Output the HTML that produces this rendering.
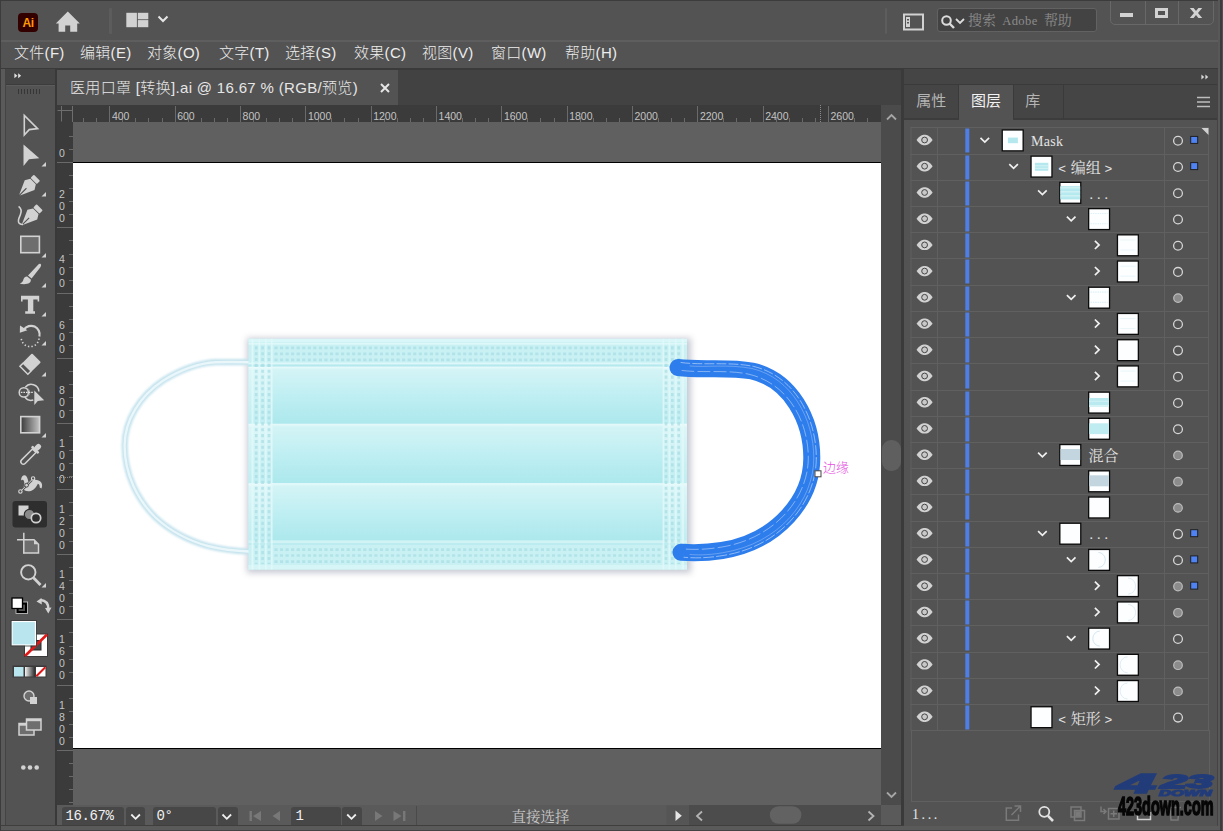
<!DOCTYPE html>
<html lang="zh-CN"><head><meta charset="utf-8"><title>Illustrator</title>
<style>
html,body{margin:0;padding:0;}
body{width:1223px;height:831px;overflow:hidden;background:#535353;font-family:"Liberation Sans","Noto Sans CJK SC",sans-serif;color:#dcdcdc;}
#app{position:relative;width:1223px;height:831px;overflow:hidden;background:#535353;}
.abs{position:absolute;}
svg{position:absolute;overflow:visible;}
/* top bar */
#topbar{position:absolute;left:0;top:0;width:1223px;height:40px;background:#535353;}
#menubar{position:absolute;left:0;top:40px;width:1223px;height:29px;background:#535353;}
#menubar span{position:absolute;top:3px;font-size:15px;line-height:20px;color:#ececec;white-space:nowrap;letter-spacing:0.3px;font-weight:300;}
/* toolbar */
#toolbar{position:absolute;left:5.6px;top:69px;width:49px;height:756.5px;background:#535353;}
#toolhead{position:absolute;left:0;top:0;width:49.4px;height:15px;background:#454545;}
/* document */
#tabbar{position:absolute;left:57px;top:70px;width:844px;height:35px;background:#424242;}
#tab{position:absolute;left:0;top:0;width:341px;height:35px;background:#535353;}
#tab .t{position:absolute;left:13px;top:8px;letter-spacing:0.33px;font-weight:300;font-size:15px;line-height:20px;color:#e6e6e6;white-space:pre;}
#paste{position:absolute;left:73px;top:122px;width:808px;height:684px;background:#606060;}
#art{position:absolute;left:73px;top:162px;width:808px;height:587px;background:#fff;border-top:1px solid #000;border-bottom:1px solid #000;box-sizing:border-box;}
#hruler{position:absolute;left:57px;top:105px;width:824px;height:17px;background:#3b3b3b;}
#vruler{position:absolute;left:57px;top:122px;width:16px;height:684px;background:#3b3b3b;}
.rl{position:absolute;font-size:10px;line-height:10px;color:#c8c8c8;font-family:"Liberation Sans",sans-serif;}
#vscroll{position:absolute;left:881px;top:105px;width:20.5px;height:701px;background:#4b4b4b;}
#status{position:absolute;left:56.5px;top:805px;width:844.5px;height:19.5px;background:#5a5a5a;}
/* panel */
#panel{position:absolute;left:903.7px;top:69px;width:313.6px;height:757px;background:#535353;}
#phead{position:absolute;left:0;top:0;width:314px;height:15px;background:#454545;}
#ptabs{position:absolute;left:0;top:16px;width:314px;height:34.5px;background:#454545;}
.ptab{position:absolute;top:0;height:34px;font-size:15px;line-height:20px;color:#b4b4b4;font-weight:400;}
.ptab span{position:absolute;top:6.2px;white-space:nowrap;}
#layers{position:absolute;left:7px;top:59px;width:299px;height:603px;}
.row{position:absolute;left:0;width:299px;height:26px;border-bottom:1px solid #464646;box-sizing:border-box;}
.lt{position:absolute;font-family:"Liberation Mono","Noto Serif CJK SC",serif;font-size:13px;line-height:16px;color:#e0e0e0;white-space:pre;}
.th{position:absolute;width:20px;height:20px;background:#fff;border:1px solid #1a1a1a;box-sizing:content-box;}
.rl{font-size:10.5px;line-height:10px;color:#c4c4c4;}
.rl.v{width:8px;text-align:center;}
.lt{font-family:"Liberation Serif","Noto Serif CJK SC",serif;font-size:15px;line-height:18px;color:#e4e4e4;}
.lt .ab{font-family:"Liberation Mono",monospace;font-size:13px;display:inline-block;width:11px;text-align:left;margin-left:-1.6px;margin-right:1.6px;font-weight:normal;}
.lt .ab.r{text-align:right;margin-left:0.4px;margin-right:0;}
.sbox{position:absolute;top:1.5px;height:18px;background:#474747;border-radius:3px 3px 0 0;}
.sbox span{position:absolute;top:0.5px;font-family:"Liberation Mono","Noto Serif CJK SC",monospace;font-size:14px;line-height:18px;color:#f0f0f0;white-space:pre;letter-spacing:-0.4px;}
#wm1{position:absolute;left:1117px;top:770px;font-family:"Liberation Sans",sans-serif;font-weight:bold;font-style:italic;font-size:27px;line-height:28px;color:#223c7a;transform-origin:0 0;transform:scaleX(2.6);white-space:nowrap;-webkit-text-stroke:1.6px #223c7a;}
#wm2{position:absolute;left:1159px;top:788.6px;font-family:"Liberation Sans",sans-serif;font-weight:bold;font-style:italic;font-size:9px;line-height:9px;color:#223c7a;transform-origin:0 0;transform:scaleX(1.85);white-space:nowrap;-webkit-text-stroke:1.1px #223c7a;}
#wm3{position:absolute;left:1118px;top:792.6px;font-family:"Liberation Sans",sans-serif;font-weight:bold;font-size:25px;line-height:26px;color:#060606;transform-origin:0 0;transform:scaleX(0.578);white-space:nowrap;-webkit-text-stroke:1.5px #060606;}

#wm4{position:absolute;left:1161px;top:771.5px;font-family:"Liberation Sans",sans-serif;font-weight:bold;font-style:italic;font-size:19px;line-height:20px;color:#223c7a;transform-origin:0 0;transform:scaleX(2.45);white-space:nowrap;-webkit-text-stroke:1.8px #223c7a;}

</style></head>
<body>
<div id="app">
<!-- topbar -->
<div id="topbar">
  <!-- Ai logo -->
  <div class="abs" style="left:18px;top:13px;width:20px;height:19px;background:#330000;border-radius:4px;"></div>
  <div class="abs" style="left:18px;top:13px;width:20px;height:19px;text-align:center;font-family:'Liberation Sans',sans-serif;font-weight:bold;font-size:12px;line-height:20px;color:#ff9a00;letter-spacing:-0.5px;">Ai</div>
  <!-- home -->
  <svg style="left:55px;top:11px" width="26" height="22" viewBox="0 0 26 22"><path d="M12.8 0.6 L0.8 12.4 L3.6 12.4 L3.6 20.8 L10.2 20.8 L10.2 14.4 L15.2 14.4 L15.2 20.8 L22.2 20.8 L22.2 12.4 L24.8 12.4 Z" fill="#d2d2d2"/></svg>
  <div class="abs" style="left:109.2px;top:8px;width:2.4px;height:26px;background:#5c5c5c;border-radius:1px;"></div>
  <!-- workspace switcher -->
  <svg style="left:126px;top:12px" width="24" height="16" viewBox="0 0 24 16"><rect x="0.3" y="0.8" width="10.6" height="14.4" fill="#d2d2d2"/><rect x="11.8" y="0.8" width="10.5" height="6.5" fill="#d2d2d2"/><rect x="11.8" y="8.1" width="10.5" height="7.1" fill="#d2d2d2"/></svg>
  <svg style="left:157px;top:15px" width="12" height="8" viewBox="0 0 12 8"><path d="M1.5 1.5 L6 6 L10.5 1.5" fill="none" stroke="#e6e6e6" stroke-width="2"/></svg>
  <!-- right side -->
  <div class="abs" style="left:884.8px;top:8px;width:2.3px;height:26px;background:#5d5d5d;border-radius:1px;"></div>
  <svg style="left:903px;top:13px" width="22" height="18" viewBox="0 0 22 18"><rect x="1" y="1.5" width="19" height="15" fill="none" stroke="#d2d2d2" stroke-width="2"/><rect x="3" y="4" width="4" height="10" fill="#d2d2d2"/><rect x="4" y="6" width="2" height="1.5" fill="#535353"/><rect x="4" y="9" width="2" height="1.5" fill="#535353"/></svg>
  <div class="abs" style="left:937px;top:8px;width:160px;height:24px;background:#434343;border:1px solid #626262;border-radius:3px;box-sizing:border-box;"></div>
  <svg style="left:940px;top:14px" width="26" height="16" viewBox="0 0 26 16"><circle cx="6.5" cy="6.5" r="4.3" fill="none" stroke="#dcdcdc" stroke-width="2"/><path d="M9.5 9.5 L14 14" stroke="#dcdcdc" stroke-width="2.4"/><path d="M16 5 L20 9 L24 5" fill="none" stroke="#dcdcdc" stroke-width="1.8"/></svg>
  <div class="abs" style="left:968px;top:10.5px;font-family:'Liberation Serif','Noto Serif CJK SC',serif;font-size:12.6px;line-height:20px;color:#8c8c8c;white-space:pre;letter-spacing:0.4px;word-spacing:2.6px;"><span style="font-size:14px;letter-spacing:0">搜索</span> Adobe <span style="font-size:14px;letter-spacing:0">帮助</span></div>
  <!-- window controls -->
  <div class="abs" style="left:1110px;top:-2px;width:104px;height:27px;border:1px solid #686868;border-radius:0 0 5px 5px;box-sizing:border-box;"></div>
  <div class="abs" style="left:1145px;top:0;width:1px;height:24px;background:#686868;"></div>
  <div class="abs" style="left:1178px;top:0;width:1px;height:24px;background:#686868;"></div>
  <div class="abs" style="left:1120px;top:13px;width:13px;height:4px;background:#d2d2d2;"></div>
  <div class="abs" style="left:1155px;top:8px;width:13px;height:10px;border:3px solid #d2d2d2;border-width:3px 3px 3px 3px;box-sizing:border-box;"></div>
  <svg style="left:1189px;top:8px" width="14" height="10" viewBox="0 0 14 10"><path d="M0.8 0 L4.6 0 L7 3.1 L9.4 0 L13.2 0 L9 5 L13.2 10 L9.4 10 L7 6.9 L4.6 10 L0.8 10 L5 5 Z" fill="#d2d2d2"/></svg>
  </div>

<!-- menubar -->
<div id="menubar">
  <span style="left:14px">文件(F)</span>
  <span style="left:80px">编辑(E)</span>
  <span style="left:147px">对象(O)</span>
  <span style="left:219px">文字(T)</span>
  <span style="left:285px">选择(S)</span>
  <span style="left:354px">效果(C)</span>
  <span style="left:422px">视图(V)</span>
  <span style="left:491px">窗口(W)</span>
  <span style="left:565px">帮助(H)</span>
</div>
<div class="abs" style="left:1px;top:40.4px;width:1217px;height:1.2px;background:#5e5e5e;"></div>
<div class="abs" style="left:0;top:68px;width:1223px;height:1.7px;background:#3a3a3a;"></div>

<!-- toolbar -->
<div class="abs" style="left:0;top:69px;width:5.5px;height:762px;background:#5a5a5a;"></div><div class="abs" style="left:5px;top:69px;width:0.8px;height:757px;background:#444;"></div>
<div id="toolbar">
  <div id="toolhead"></div>
  <div class="abs" style="left:0;top:14.6px;width:49px;height:1px;background:#3c3c3c;"></div>
  <div class="abs" style="left:0;top:15.8px;width:49px;height:1px;background:#5c5c5c;"></div>
  <svg style="left:8.2px;top:4.4px" width="7.6" height="5.6" viewBox="0 0 10 7"><path d="M0.5 0.3 L4.4 3.5 L0.5 6.7 Z M5.5 0.3 L9.4 3.5 L5.5 6.7 Z" fill="#e2e2e2"/></svg>
  <div class="abs" style="left:12.4px;top:19.6px;width:23px;height:5.6px;background:repeating-linear-gradient(90deg,#363636 0,#363636 1px,transparent 1px,transparent 3px);"></div>
</div>
<svg id="tools" style="left:0;top:0" width="60" height="831" viewBox="0 0 60 831">
  <g fill="none" stroke="#d2d2d2" stroke-width="1.6" stroke-linejoin="miter">
    <!-- selection -->
    <path d="M24.3 115.5 L24.3 135 L29.2 129.6 L37.6 128.6 Z"/>
  </g>
  <g fill="#d2d2d2">
    <!-- direct selection -->
    <path d="M23.5 144.5 L23.5 166 L29 159.3 L39.3 158.2 Z"/>
    <path d="M46 162 L46 166.5 L41.5 166.5 Z"/>
    <!-- pen -->
    <g transform="translate(27.5,187.2) rotate(45)">
      <rect x="-4.4" y="-13.4" width="8.8" height="4.7" rx="0.9"/>
      <path d="M-3.9 -7.9 L3.9 -7.9 L6.9 -3 L0.55 11.2 L0.55 1.5 L-0.55 1.5 L-0.55 11.2 L-6.9 -3 Z"/>
    </g>
    <path d="M46 192 L46 196.5 L41.5 196.5 Z"/>
    <!-- curvature -->
    <g transform="translate(30.2,216.8) rotate(45)">
      <rect x="-4.4" y="-13.4" width="8.8" height="4.7" rx="0.9"/>
      <path d="M-3.9 -7.9 L3.9 -7.9 L6.9 -3 L0.55 11.2 L0.55 1.5 L-0.55 1.5 L-0.55 11.2 L-6.9 -3 Z"/>
    </g>
    <path d="M18.6 206.3 C21.5 208.5 21.8 211.5 20.3 215 C18.8 218.3 17.3 220.5 19 223 C20 224.3 21.5 224.6 23 224.4" fill="none" stroke="#d2d2d2" stroke-width="1.6"/>
    <!-- rectangle -->
    <rect x="20.8" y="236.3" width="18.6" height="16.4" fill="#6e6e6e" stroke="#d2d2d2" stroke-width="1.6"/>
    <path d="M46 253 L46 257.5 L41.5 257.5 Z"/>
    <!-- brush -->
    <path d="M40.6 264.1 C41.6 265 41 266.3 40.2 267.4 L31.6 278.6 L28 275.6 L37.9 265 C38.8 264 39.9 263.5 40.6 264.1 Z"/>
    <path d="M27.2 276.4 L30.8 279.5 C31.3 283 27.5 285 19.8 283.8 C22.3 282.7 23 281.2 23.4 279.6 C24 277.4 25.5 276.2 27.2 276.4 Z"/>
    <path d="M46 283 L46 287.5 L41.5 287.5 Z"/>
    <!-- type -->
    <path d="M21 295.8 L39.2 295.8 L39.2 301.4 L37.6 301.4 L37.6 299.6 L33.3 299.6 L33.3 311.2 L35 311.2 L35 313.8 L25.2 313.8 L25.2 311.2 L27.9 311.2 L27.9 299.6 L22.6 299.6 L22.6 301.4 L21 301.4 Z"/>
    <path d="M46 312 L46 316.5 L41.5 316.5 Z"/>
    <!-- rotate -->
    <path d="M24 329.5 A8.6 8.6 0 0 1 39.4 336.5" fill="none" stroke="#d2d2d2" stroke-width="2.2"/>
    <path d="M20 325.5 L27.4 330.3 L19.8 332.8 Z"/>
    <path d="M39 338.5 A8.8 8.8 0 0 1 21.3 337" fill="none" stroke="#d2d2d2" stroke-width="1.6" stroke-dasharray="1.4 2.1"/>
    <path d="M46 341 L46 345.5 L41.5 345.5 Z"/>
    <!-- eraser -->
    <g transform="translate(31.8,362.4) rotate(-45)">
      <rect x="-6.6" y="-6.3" width="13.2" height="12.6" rx="1"/>
      <rect x="-11.2" y="-5.6" width="4.6" height="11.2" fill="none" stroke="#d2d2d2" stroke-width="1.5"/>
    </g>
    <path d="M46 372 L46 376.5 L41.5 376.5 Z"/>
    <!-- shape builder -->
    <circle cx="23.8" cy="392.4" r="4.6" fill="none" stroke="#d2d2d2" stroke-width="1.5"/>
    <path d="M25.3 387.3 A7.6 7.6 0 0 1 38.9 391.5" fill="none" stroke="#d2d2d2" stroke-width="1.5"/>
    <path d="M24.8 396.9 A7.6 7.6 0 0 0 33.3 400" fill="none" stroke="#d2d2d2" stroke-width="1.5"/>
    <path d="M27 388 A5 5 0 0 1 27 397" fill="none" stroke="#9a9a9a" stroke-width="1"/>
    <path d="M20.8 392.4 L33.5 392.4" fill="none" stroke="#e0e0e0" stroke-width="1.2" stroke-dasharray="1.6 1"/>
    <path d="M34.3 390.6 L34.3 405 L37.8 401 L44.2 400.3 Z"/>
    <!-- gradient -->
    <linearGradient id="gg" x1="0" y1="0" x2="1" y2="0"><stop offset="0" stop-color="#3a3a3a"/><stop offset="1" stop-color="#c4c4c4"/></linearGradient>
    <rect x="20.8" y="416.6" width="18.8" height="16.2" fill="url(#gg)" stroke="#d2d2d2" stroke-width="1.6"/>
    <path d="M46 433 L46 437.5 L41.5 437.5 Z"/>
    <!-- eyedropper -->
    <g transform="translate(30,455) rotate(45)">
      <rect x="-2.6" y="-14.5" width="5.2" height="7" rx="2.2"/>
      <rect x="-4.8" y="-8.6" width="9.6" height="2.6" rx="0.8"/>
      <path d="M-2.5 -6 L2.5 -6 L2.5 9.4 A2.5 2.5 0 0 1 -2.5 9.4 Z" fill="none" stroke="#d2d2d2" stroke-width="1.5" stroke-linejoin="round"/>
    </g>
    <!-- warp -->
    <path d="M21.2 480.4 C21 477.5 22.5 475.3 24.5 475.3 C26.7 475.4 27.7 478.6 28.4 481.6 C30.6 480.4 33.2 479.5 36.6 479.9 C40.3 480.4 42.3 482.9 42.1 485.6 C42 486.9 41.8 487.8 41.4 488.5 L39.7 487.5 C39.9 485.6 39.2 483.9 37.9 483.7 C36.2 487 33.8 490.6 29.5 491.2 C26.6 491.6 23.8 490.6 22.6 488.3 C24.6 485.6 24.8 482.6 23.7 480.6 C23.1 479.6 22 479.7 21.2 480.4 Z"/>
    <path d="M20.6 491.3 L33 478.6" stroke="#535353" stroke-width="2.6" fill="none"/>
    <path d="M20.6 491.3 L33 478.6" stroke="#d8d8d8" stroke-width="1" fill="none"/>
    <circle cx="26.6" cy="485.2" r="1.9" fill="#d2d2d2" stroke="#4a4a4a" stroke-width="1"/>
    <circle cx="20.4" cy="491.5" r="1.7" fill="#535353" stroke="#d8d8d8" stroke-width="1.1"/>
    <circle cx="33.1" cy="478.4" r="1.7" fill="#535353" stroke="#d8d8d8" stroke-width="1.1"/>
    <!-- live paint selected -->
    <rect x="12.5" y="501" width="34.5" height="26.5" rx="3" fill="#2e2e2e"/>
    <rect x="18.5" y="505.5" width="10" height="10" fill="#d2d2d2"/>
    <circle cx="29.5" cy="514.5" r="5.2" fill="#8a8a8a" stroke="#2e2e2e" stroke-width="1.2"/>
    <circle cx="36" cy="518" r="4.7" fill="#2e2e2e" stroke="#d2d2d2" stroke-width="1.7"/>
    <!-- artboard -->
    <path d="M23.8 532.8 L23.8 553.6 M17 539.8 L23.8 539.8" stroke="#d2d2d2" stroke-width="1.5" fill="none"/>
    <path d="M23.8 539.8 L34 539.8 L38.5 544.3 L38.5 553 L23.8 553 Z" fill="#6e6e6e" stroke="#d2d2d2" stroke-width="1.5"/>
    <path d="M34 539.8 L34 544.3 L38.5 544.3 Z" fill="#d2d2d2" stroke="none"/>
    <!-- zoom -->
    <circle cx="28.3" cy="572.3" r="7.2" fill="none" stroke="#d2d2d2" stroke-width="1.9"/>
    <path d="M33.5 577.8 L40.5 585" stroke="#d2d2d2" stroke-width="2.8" fill="none"/>
    <path d="M46 583 L46 587.5 L41.5 587.5 Z"/>
    <!-- default fill/stroke -->
    <rect x="17.3" y="603.3" width="9" height="9" fill="none" stroke="#000" stroke-width="2.6"/>
    <rect x="16" y="602" width="11.6" height="11.6" fill="none" stroke="#d2d2d2" stroke-width="0.8"/>
    <rect x="12" y="598" width="10.5" height="10.5" fill="#fff" stroke="#000" stroke-width="1.3"/>
    <!-- swap -->
    <path d="M40.5 600 C46 600.5 48.5 604 48.3 609" fill="none" stroke="#d2d2d2" stroke-width="2.4"/>
    <path d="M36.5 601.5 L41.5 598 L41.8 604.6 Z M45 608 L51.5 607.6 L48.3 613.5 Z"/>
  </g>
  <!-- stroke swatch -->
  <rect x="24.5" y="634" width="23" height="22.5" fill="#fff" stroke="#3a3a3a" stroke-width="1"/>
  <rect x="31" y="640.5" width="10" height="9.5" fill="#4a4a4a" stroke="#2a2a2a" stroke-width="1"/>
  <path d="M25 656 L47 634.5" stroke="#e01818" stroke-width="2.6"/>
  <!-- fill swatch -->
  <rect x="12" y="621.5" width="23.5" height="23.5" fill="#b9e6ee" stroke="#fff" stroke-width="1.2"/>
  <rect x="11" y="620.5" width="25.5" height="25.5" fill="none" stroke="#3a3a3a" stroke-width="0.8"/>
  <!-- modes -->
  <rect x="12.5" y="665.5" width="34" height="12" fill="#3a3a3a"/>
  <rect x="14" y="667" width="9.5" height="9.5" fill="#b9e6ee"/>
  <linearGradient id="gm" x1="0" y1="0" x2="1" y2="0"><stop offset="0" stop-color="#f4f4f4"/><stop offset="1" stop-color="#333"/></linearGradient>
  <rect x="25" y="667" width="9.5" height="9.5" fill="url(#gm)"/>
  <rect x="36" y="667" width="9.5" height="9.5" fill="#fff"/>
  <path d="M36.3 676.3 L45.3 667.3" stroke="#e01818" stroke-width="2"/>
  <!-- draw mode -->
  <circle cx="29" cy="696" r="5" fill="#6e6e6e" stroke="#d2d2d2" stroke-width="1.4"/>
  <rect x="30" y="697" width="7" height="7" fill="#d2d2d2"/>
  <!-- screen mode -->
  <rect x="19" y="723.5" width="15" height="11.5" fill="#6e6e6e" stroke="#d2d2d2" stroke-width="1.5"/>
  <rect x="19" y="723.5" width="15" height="2.2" fill="#d2d2d2"/>
  <rect x="26.5" y="719" width="14.5" height="11" fill="#6e6e6e" stroke="#d2d2d2" stroke-width="1.5"/>
  <rect x="26.5" y="719" width="14.5" height="2.2" fill="#d2d2d2"/>
  <!-- more -->
  <circle cx="23.3" cy="767.5" r="2.3" fill="#d2d2d2"/><circle cx="30" cy="767.5" r="2.3" fill="#d2d2d2"/><circle cx="36.7" cy="767.5" r="2.3" fill="#d2d2d2"/>
</svg>

<!-- doc -->
<div id="tabbar">
  <div id="tab"><div class="t">医用口罩 [转换].ai @ 16.67 % (RGB/预览)</div>
    <svg style="left:323px;top:13px" width="10" height="10" viewBox="0 0 10 10"><path d="M1 1 L9 9 M9 1 L1 9" stroke="#e6e6e6" stroke-width="2"/></svg>
  </div>
</div>
<div id="paste"></div>
<div id="art"></div>
<div id="vscroll">
  <svg style="left:5px;top:8px" width="11" height="8" viewBox="0 0 11 8"><path d="M1 6.5 L5.5 2 L10 6.5" fill="none" stroke="#a6a6a6" stroke-width="1.8"/></svg>
  <div class="abs" style="left:1px;top:335px;width:18.5px;height:31px;border-radius:9px;background:#5f5f5f;"></div>
  <svg style="left:5px;top:686px" width="11" height="8" viewBox="0 0 11 8"><path d="M1 1.5 L5.5 6 L10 1.5" fill="none" stroke="#a6a6a6" stroke-width="1.8"/></svg>
</div>
<div class="abs" style="left:901px;top:69px;width:3px;height:762px;background:#3a3a3a;"></div>

<!-- canvas -->
<svg id="artsvg" style="left:0;top:0" width="901" height="831" viewBox="0 0 901 831">
  <defs>
    <filter id="blur3" x="-10%" y="-10%" width="120%" height="120%"><feGaussianBlur stdDeviation="3.2"/></filter>
    <filter id="blur05" x="-5%" y="-5%" width="110%" height="110%"><feGaussianBlur stdDeviation="0.45"/></filter>
    <filter id="blur1" x="-10%" y="-10%" width="120%" height="120%"><feGaussianBlur stdDeviation="0.8"/></filter>
    <linearGradient id="pleat" x1="0" y1="0" x2="0" y2="1">
      <stop offset="0" stop-color="#e8fafb"/><stop offset="0.05" stop-color="#d4f4f6"/><stop offset="0.55" stop-color="#bdeef2"/><stop offset="1" stop-color="#ace8ed"/>
    </linearGradient>
    <linearGradient id="pleatside" x1="0" y1="0" x2="0" y2="1">
      <stop offset="0" stop-color="#eefcfc"/><stop offset="0.06" stop-color="#dcf6f8"/><stop offset="1" stop-color="#bfeef2"/>
    </linearGradient>
  </defs>
  <!-- shadow -->
  <rect x="247" y="338" width="444" height="235" fill="#868aa0" opacity="0.45" filter="url(#blur3)"/>
  <!-- left ear loop -->
  <g fill="none" stroke-linecap="round">
    <path d="M249 362.2 C236 362 222 362 215.8 362.2 C200 363 180 370 162.9 380.7 C140 396 124.6 420 124.6 445.5 C124.6 475 138 500 155 517 C172 533 190 541 207.9 546 C222 549.5 236 551 249 551.5" stroke="#c3e2ed" stroke-width="6.2" filter="url(#blur1)"/>
    <path d="M249 362.2 C236 362 222 362 215.8 362.2 C200 363 180 370 162.9 380.7 C140 396 124.6 420 124.6 445.5 C124.6 475 138 500 155 517 C172 533 190 541 207.9 546 C222 549.5 236 551 249 551.5" stroke="#e9f6fa" stroke-width="2.4" filter="url(#blur05)"/>
  </g>
  <!-- mask body -->
  <rect x="248.5" y="338.8" width="438.5" height="230.7" fill="#c9f1f4"/>
  <rect x="248.5" y="338.8" width="438.5" height="3.6" fill="#d9f6f8"/>
  <rect x="248.5" y="343" width="438.5" height="1.6" fill="#def7f9"/>
  <rect x="248.5" y="362.5" width="438.5" height="2" fill="#def7f9"/>
  <rect x="248.5" y="364.6" width="438.5" height="2.2" fill="#b4e9ee"/>
  <!-- pleats full-width (side strips) -->
  <rect x="248.5" y="366.8" width="438.5" height="57" fill="url(#pleatside)"/>
  <rect x="248.5" y="423.8" width="438.5" height="59.5" fill="url(#pleatside)"/>
  <rect x="248.5" y="483.3" width="438.5" height="57.2" fill="url(#pleatside)"/>
  <!-- pleats inner -->
  <rect x="272" y="366.8" width="391.3" height="57" fill="url(#pleat)"/>
  <rect x="272" y="423.8" width="391.3" height="59.5" fill="url(#pleat)"/>
  <rect x="272" y="483.3" width="391.3" height="57.2" fill="url(#pleat)"/>
  <!-- bottom band -->
  <rect x="248.5" y="540.5" width="438.5" height="2.4" fill="#d2f3f6"/>
  <rect x="248.5" y="543" width="438.5" height="2" fill="#bcecf0"/>
  <rect x="248.5" y="565" width="438.5" height="4.5" fill="#d6f5f7"/>
  <!-- light vertical strips -->
  <g fill="#e4f9fa" opacity="0.75">
    <rect x="251.5" y="338.8" width="2" height="230.7"/><rect x="258.6" y="338.8" width="1.6" height="230.7"/><rect x="265" y="338.8" width="1.6" height="230.7"/><rect x="271" y="338.8" width="1.6" height="230.7"/>
    <rect x="662.6" y="338.8" width="1.6" height="230.7"/><rect x="668.6" y="338.8" width="1.6" height="230.7"/><rect x="675" y="338.8" width="1.6" height="230.7"/><rect x="681.6" y="338.8" width="2.4" height="230.7"/>
  </g>
  <!-- stitches -->
  <g fill="none" stroke="#a6dde3" stroke-width="2.7" opacity="0.68" filter="url(#blur05)">
    <path stroke-dasharray="3.2 2.35" d="M274.4 347.8 H662 M274.4 353.8 H662 M274.4 359.9 H662"/>
    <path stroke-dasharray="3.2 2.35" d="M274.4 549.6 H662 M274.4 555.5 H662 M274.4 561.6 H662"/>
    <path stroke-dasharray="3.1 2.75" d="M256.2 346.3 V564 M262.6 346.3 V564 M269 346.3 V564"/>
    <path stroke-dasharray="3.1 2.75" d="M666 346.3 V564 M672.3 346.3 V564 M678.7 346.3 V564"/>
  </g>
  <!-- right ear loop (selected) -->
  <g fill="none" stroke-linecap="round" stroke-linejoin="round">
    <path id="loopR" d="M678 367.5 C700 370.5 728 366.5 752 371 C791 380 811.8 420 811.8 458 C811.8 499 778 541.5 722 550.5 C704 553.5 692 553 681 552.3" stroke="#2e7dec" stroke-width="17"/>
    <path d="M681 362.5 C702 365.5 730 361.5 754 366.5 C795 376.5 816.3 418 816.3 458" stroke="#dbe9fb" stroke-width="0.7" stroke-dasharray="9 3" opacity="0.8"/>
    <path d="M682 370.5 C702 373 730 369.5 750 374.5 C788 384 808.3 421 808.3 458 C808.3 497 776 538 722 547 C704 550 692 549.5 684 549" stroke="#dbe9fb" stroke-width="0.7" stroke-dasharray="12 4" opacity="0.7"/>
    <path d="M816.3 458 C816.3 502 781 546.5 723 555.5 C705 558.5 693 558 684 557.3" stroke="#dbe9fb" stroke-width="0.7" stroke-dasharray="10 3" opacity="0.8"/>
    <path d="M690 366 C705 367.5 728 364 752 368.5 C792 378 813.8 419 813.8 458 C813.8 500 780 543.5 722.5 552.8 C706 555.5 696 555 690 554.5" stroke="#cfe1fa" stroke-width="0.6" opacity="0.6"/>
  </g>
  <rect x="815" y="470.8" width="6" height="6" fill="#fff" stroke="#444" stroke-width="1"/>
</svg>
<div class="abs" style="left:823px;top:459.6px;font-size:13px;line-height:16px;color:#e650e2;font-weight:300;white-space:nowrap;">边缘</div>

<!-- rulers -->
<div id="hruler"></div><div id="vruler"></div>
<svg id="rulersvg" style="left:0;top:0" width="901" height="831" viewBox="0 0 901 831">
<rect x="57" y="105" width="16" height="17" fill="#3b3b3b"/>
<path d="M57.5 110.5 L72.5 110.5 M61.5 106 L61.5 121.5 M72.5 106 L72.5 122" stroke="#6e6e6e" stroke-width="1" fill="none"/>
<path d="M109.5 106 L109.5 122 M175.5 106 L175.5 122 M240.5 106 L240.5 122 M305.5 106 L305.5 122 M371.5 106 L371.5 122 M436.5 106 L436.5 122 M501.5 106 L501.5 122 M567.5 106 L567.5 122 M632.5 106 L632.5 122 M697.5 106 L697.5 122 M763.5 106 L763.5 122 M828.5 106 L828.5 122" stroke="#6a6a6a" stroke-width="1" fill="none"/>
<path d="M83.5 118 L83.5 122 M96.5 118 L96.5 122 M122.5 118 L122.5 122 M135.5 118 L135.5 122 M148.5 118 L148.5 122 M162.5 118 L162.5 122 M188.5 118 L188.5 122 M201.5 118 L201.5 122 M214.5 118 L214.5 122 M227.5 118 L227.5 122 M253.5 118 L253.5 122 M266.5 118 L266.5 122 M279.5 118 L279.5 122 M292.5 118 L292.5 122 M318.5 118 L318.5 122 M331.5 118 L331.5 122 M344.5 118 L344.5 122 M358.5 118 L358.5 122 M384.5 118 L384.5 122 M397.5 118 L397.5 122 M410.5 118 L410.5 122 M423.5 118 L423.5 122 M449.5 118 L449.5 122 M462.5 118 L462.5 122 M475.5 118 L475.5 122 M488.5 118 L488.5 122 M514.5 118 L514.5 122 M527.5 118 L527.5 122 M540.5 118 L540.5 122 M554.5 118 L554.5 122 M580.5 118 L580.5 122 M593.5 118 L593.5 122 M606.5 118 L606.5 122 M619.5 118 L619.5 122 M645.5 118 L645.5 122 M658.5 118 L658.5 122 M671.5 118 L671.5 122 M684.5 118 L684.5 122 M710.5 118 L710.5 122 M723.5 118 L723.5 122 M736.5 118 L736.5 122 M750.5 118 L750.5 122 M776.5 118 L776.5 122 M789.5 118 L789.5 122 M802.5 118 L802.5 122 M815.5 118 L815.5 122 M841.5 118 L841.5 122 M854.5 118 L854.5 122 M867.5 118 L867.5 122" stroke="#6a6a6a" stroke-width="1" fill="none"/>
<path d="M820.5 105 L820.5 122" stroke="#8a8a8a" stroke-width="1" stroke-dasharray="1 1" fill="none"/>
<path d="M57 162.5 L73 162.5 M57 227.5 L73 227.5 M57 293.5 L73 293.5 M57 358.5 L73 358.5 M57 423.5 L73 423.5 M57 489.5 L73 489.5 M57 554.5 L73 554.5 M57 619.5 L73 619.5 M57 685.5 L73 685.5 M57 750.5 L73 750.5" stroke="#6a6a6a" stroke-width="1" fill="none"/>
<path d="M69 136.5 L73 136.5 M69 149.5 L73 149.5 M69 175.5 L73 175.5 M69 188.5 L73 188.5 M69 201.5 L73 201.5 M69 214.5 L73 214.5 M69 240.5 L73 240.5 M69 254.5 L73 254.5 M69 267.5 L73 267.5 M69 280.5 L73 280.5 M69 306.5 L73 306.5 M69 319.5 L73 319.5 M69 332.5 L73 332.5 M69 345.5 L73 345.5 M69 371.5 L73 371.5 M69 384.5 L73 384.5 M69 397.5 L73 397.5 M69 410.5 L73 410.5 M69 436.5 L73 436.5 M69 450.5 L73 450.5 M69 463.5 L73 463.5 M69 476.5 L73 476.5 M69 502.5 L73 502.5 M69 515.5 L73 515.5 M69 528.5 L73 528.5 M69 541.5 L73 541.5 M69 567.5 L73 567.5 M69 580.5 L73 580.5 M69 593.5 L73 593.5 M69 606.5 L73 606.5 M69 632.5 L73 632.5 M69 646.5 L73 646.5 M69 659.5 L73 659.5 M69 672.5 L73 672.5 M69 698.5 L73 698.5 M69 711.5 L73 711.5 M69 724.5 L73 724.5 M69 737.5 L73 737.5 M69 763.5 L73 763.5 M69 776.5 L73 776.5 M69 789.5 L73 789.5 M69 802.5 L73 802.5" stroke="#6a6a6a" stroke-width="1" fill="none"/>
<path d="M57 477.5 L73 477.5" stroke="#8a8a8a" stroke-width="1" stroke-dasharray="1 1" fill="none"/>
</svg>
<div class="rl" style="left:111.9px;top:110.7px">400</div>
<div class="rl" style="left:177.2px;top:110.7px">600</div>
<div class="rl" style="left:242.6px;top:110.7px">800</div>
<div class="rl" style="left:307.9px;top:110.7px">1000</div>
<div class="rl" style="left:373.2px;top:110.7px">1200</div>
<div class="rl" style="left:438.6px;top:110.7px">1400</div>
<div class="rl" style="left:503.9px;top:110.7px">1600</div>
<div class="rl" style="left:569.2px;top:110.7px">1800</div>
<div class="rl" style="left:634.5px;top:110.7px">2000</div>
<div class="rl" style="left:699.9px;top:110.7px">2200</div>
<div class="rl" style="left:765.2px;top:110.7px">2400</div>
<div class="rl" style="left:830.5px;top:110.7px">2600</div>
<div class="rl v" style="left:58px;top:147.5px">0</div>
<div class="rl v" style="left:58px;top:188.8px">2</div>
<div class="rl v" style="left:58px;top:200.8px">0</div>
<div class="rl v" style="left:58px;top:212.8px">0</div>
<div class="rl v" style="left:58px;top:254.2px">4</div>
<div class="rl v" style="left:58px;top:266.2px">0</div>
<div class="rl v" style="left:58px;top:278.2px">0</div>
<div class="rl v" style="left:58px;top:319.5px">6</div>
<div class="rl v" style="left:58px;top:331.5px">0</div>
<div class="rl v" style="left:58px;top:343.5px">0</div>
<div class="rl v" style="left:58px;top:384.8px">8</div>
<div class="rl v" style="left:58px;top:396.8px">0</div>
<div class="rl v" style="left:58px;top:408.8px">0</div>
<div class="rl v" style="left:58px;top:438.1px">1</div>
<div class="rl v" style="left:58px;top:450.1px">0</div>
<div class="rl v" style="left:58px;top:462.1px">0</div>
<div class="rl v" style="left:58px;top:474.1px">0</div>
<div class="rl v" style="left:58px;top:503.5px">1</div>
<div class="rl v" style="left:58px;top:515.5px">2</div>
<div class="rl v" style="left:58px;top:527.5px">0</div>
<div class="rl v" style="left:58px;top:539.5px">0</div>
<div class="rl v" style="left:58px;top:568.8px">1</div>
<div class="rl v" style="left:58px;top:580.8px">4</div>
<div class="rl v" style="left:58px;top:592.8px">0</div>
<div class="rl v" style="left:58px;top:604.8px">0</div>
<div class="rl v" style="left:58px;top:634.1px">1</div>
<div class="rl v" style="left:58px;top:646.1px">6</div>
<div class="rl v" style="left:58px;top:658.1px">0</div>
<div class="rl v" style="left:58px;top:670.1px">0</div>
<div class="rl v" style="left:58px;top:699.5px">1</div>
<div class="rl v" style="left:58px;top:711.5px">8</div>
<div class="rl v" style="left:58px;top:723.5px">0</div>
<div class="rl v" style="left:58px;top:735.5px">0</div>
<!-- status -->
<div id="status">
  <div class="sbox" style="left:5px;width:62px;"><span style="left:4px">16.67%</span></div>
  <div class="sbox" style="left:69px;width:19px;"></div>
  <div class="sbox" style="left:96px;width:63px;"><span style="left:4px">0°</span></div>
  <div class="sbox" style="left:161px;width:20px;"></div>
  <div class="sbox" style="left:234px;width:50px;"><span style="left:5px">1</span></div>
  <div class="sbox" style="left:285px;width:20px;"></div>
  <svg style="left:0;top:0" width="844" height="21" viewBox="0 0 844 21">
    <g fill="none" stroke="#f0f0f0" stroke-width="1.8">
      <path d="M74.3 9.5 L78.6 13.8 L82.9 9.5"/><path d="M165.5 9.5 L169.8 13.8 L174.1 9.5"/><path d="M290.2 9.5 L294.5 13.8 L298.8 9.5"/>
    </g>
    <g fill="#787878">
      <rect x="192.5" y="6" width="2.4" height="10"/><path d="M204 6 L204 16 L196 11 Z"/>
      <path d="M223 6 L223 16 L215.5 11 Z"/>
      <path d="M318 6 L318 16 L325.5 11 Z"/>
      <path d="M336.5 6 L336.5 16 L344.5 11 Z"/><rect x="346" y="6" width="2.4" height="10"/>
    </g>
    <rect x="359" y="1" width="1" height="19" fill="#4a4a4a"/>
        <rect x="609.5" y="0.5" width="22.5" height="19" fill="#555555"/><rect x="632" y="0" width="192" height="21" fill="#4c4c4c"/>
    <path d="M618.5 5.5 L618.5 16 L624.8 10.8 Z" fill="#e6e6e6"/>
    <rect x="712.8" y="1.3" width="31.6" height="17.4" rx="8.7" fill="#626262"/>
    <path d="M645 6.5 L640 11 L645 15.5" fill="none" stroke="#b4b4b4" stroke-width="1.8"/>
    <path d="M811.5 6.5 L816.5 11 L811.5 15.5" fill="none" stroke="#b4b4b4" stroke-width="1.8"/>
  </svg>
  <div class="abs" style="left:455px;top:3px;font-family:'Liberation Serif','Noto Serif CJK SC',serif;font-size:14.5px;line-height:18px;color:#c8c8c8;white-space:nowrap;">直接选择</div>
</div>
<div class="abs" style="left:0;top:824.5px;width:1223px;height:1.6px;background:#3f3f3f;"></div>
<div class="abs" style="left:0;top:826px;width:1223px;height:5px;background:#5a5a5a;"></div>
<div class="abs" style="left:0;top:829.6px;width:1223px;height:1.4px;background:#434343;"></div>
<div class="abs" style="left:0;top:0;width:1px;height:831px;background:#3c3c3c;"></div>
<div class="abs" style="left:0;top:0;width:1223px;height:1px;background:#3c3c3c;"></div>
<div class="abs" style="left:54.8px;top:69px;width:2.2px;height:756px;background:#393939;"></div>

<!-- panel -->
<div id="panel">
  <div id="phead"></div>
  <svg style="left:297.5px;top:4.5px" width="8" height="6" viewBox="0 0 10 7"><path d="M0.5 0.5 L4 3.5 L0.5 6.5 Z M5.5 0.5 L9 3.5 L5.5 6.5 Z" fill="#d8d8d8"/></svg>
  <div id="ptabs">
    <div class="ptab" style="left:0;width:55px;"><span style="left:12.6px">属性</span></div>
    <div class="ptab" style="left:55.2px;width:54.4px;background:#535353;color:#f2f2f2;height:36px"><span style="left:12.2px">图层</span></div>
    <div class="ptab" style="left:109.6px;width:50px;"><span style="left:12px">库</span></div>
    <div class="abs" style="left:54.4px;top:0;width:1px;height:33.5px;background:#3a3a3a"></div>
    <div class="abs" style="left:109.4px;top:0;width:1px;height:33.5px;background:#3a3a3a"></div>
    <div class="abs" style="left:159.4px;top:0;width:1px;height:33.5px;background:#3a3a3a"></div>
    <div class="abs" style="left:0;top:-1px;width:314px;height:1px;background:#3a3a3a"></div>
    <div class="abs" style="left:0;top:33px;width:55.2px;height:1.5px;background:#3c3c3c"></div>
    <div class="abs" style="left:109.6px;top:33px;width:205px;height:1.5px;background:#3c3c3c"></div>
    <svg style="left:293px;top:11px" width="14" height="12" viewBox="0 0 14 12"><path d="M0 1.5 H13 M0 6 H13 M0 10.5 H13" stroke="#bdbdbd" stroke-width="1.6"/></svg>
  </div>
</div>
<div class="abs" style="left:1217.6px;top:0;width:2px;height:826px;background:#585858;"></div><div class="abs" style="left:1219.5px;top:0;width:2px;height:831px;background:#3c3c3c;"></div><div class="abs" style="left:1221.5px;top:0;width:1.5px;height:831px;background:#505050;"></div><div class="abs" style="left:1217px;top:69px;width:0.8px;height:757px;background:#444;"></div>

<!-- layers -->
<svg id="layersvg" style="left:0;top:0" width="1223" height="831" viewBox="0 0 1223 831">
<path d="M910.5 127.5 L1209.0 127.5 M910.5 154.5 L1209.0 154.5 M910.5 180.5 L1209.0 180.5 M910.5 206.5 L1209.0 206.5 M910.5 232.5 L1209.0 232.5 M910.5 258.5 L1209.0 258.5 M910.5 285.5 L1209.0 285.5 M910.5 311.5 L1209.0 311.5 M910.5 337.5 L1209.0 337.5 M910.5 363.5 L1209.0 363.5 M910.5 390.5 L1209.0 390.5 M910.5 416.5 L1209.0 416.5 M910.5 442.5 L1209.0 442.5 M910.5 468.5 L1209.0 468.5 M910.5 494.5 L1209.0 494.5 M910.5 521.5 L1209.0 521.5 M910.5 547.5 L1209.0 547.5 M910.5 573.5 L1209.0 573.5 M910.5 599.5 L1209.0 599.5 M910.5 625.5 L1209.0 625.5 M910.5 652.5 L1209.0 652.5 M910.5 678.5 L1209.0 678.5 M910.5 704.5 L1209.0 704.5 M910.5 730.5 L1209.0 730.5 M911.0 127.5 L911.0 730.5 M937.5 127.5 L937.5 730.5 M1164.5 127.5 L1164.5 730.5 M1208.5 127.5 L1208.5 730.5" stroke="#606060" stroke-width="1" fill="none"/>
<rect x="965.3" y="128.5" width="4" height="24.0" fill="#4f7fe6"/>
<rect x="965.3" y="155.5" width="4" height="24.0" fill="#4f7fe6"/>
<rect x="965.3" y="181.5" width="4" height="24.0" fill="#4f7fe6"/>
<rect x="965.3" y="207.5" width="4" height="24.0" fill="#4f7fe6"/>
<rect x="965.3" y="233.5" width="4" height="24.0" fill="#4f7fe6"/>
<rect x="965.3" y="259.5" width="4" height="24.0" fill="#4f7fe6"/>
<rect x="965.3" y="286.5" width="4" height="24.0" fill="#4f7fe6"/>
<rect x="965.3" y="312.5" width="4" height="24.0" fill="#4f7fe6"/>
<rect x="965.3" y="338.5" width="4" height="24.0" fill="#4f7fe6"/>
<rect x="965.3" y="364.5" width="4" height="24.0" fill="#4f7fe6"/>
<rect x="965.3" y="391.5" width="4" height="24.0" fill="#4f7fe6"/>
<rect x="965.3" y="417.5" width="4" height="24.0" fill="#4f7fe6"/>
<rect x="965.3" y="443.5" width="4" height="24.0" fill="#4f7fe6"/>
<rect x="965.3" y="469.5" width="4" height="24.0" fill="#4f7fe6"/>
<rect x="965.3" y="495.5" width="4" height="24.0" fill="#4f7fe6"/>
<rect x="965.3" y="522.5" width="4" height="24.0" fill="#4f7fe6"/>
<rect x="965.3" y="548.5" width="4" height="24.0" fill="#4f7fe6"/>
<rect x="965.3" y="574.5" width="4" height="24.0" fill="#4f7fe6"/>
<rect x="965.3" y="600.5" width="4" height="24.0" fill="#4f7fe6"/>
<rect x="965.3" y="626.5" width="4" height="24.0" fill="#4f7fe6"/>
<rect x="965.3" y="653.5" width="4" height="24.0" fill="#4f7fe6"/>
<rect x="965.3" y="679.5" width="4" height="24.0" fill="#4f7fe6"/>
<rect x="965.3" y="705.5" width="4" height="24.0" fill="#4f7fe6"/>
<defs><linearGradient id="tst" x1="0" y1="0" x2="0" y2="1"><stop offset="0" stop-color="#d6f3f6"/><stop offset="1" stop-color="#a9e6ec"/></linearGradient></defs>
<g transform="translate(924.6,140.0)"><path d="M-8 0 C-5 -4.2 -2.5 -5.2 0 -5.2 C2.5 -5.2 5 -4.2 8 0 C5 4.2 2.5 5.2 0 5.2 C-2.5 5.2 -5 4.2 -8 0 Z" fill="#d2d2d2"/><circle cx="0" cy="0" r="2.9" fill="#c8c8c8" stroke="#444" stroke-width="1"/></g>
<path transform="translate(984.8,140.0)" d="M-4.3 -2.1 L0 2.1 L4.3 -2.1" fill="none" stroke="#f0f0f0" stroke-width="1.7"/>
<rect x="1001.6" y="129.3" width="22.2" height="22.2" fill="#0c0c0c"/><rect x="1002.9" y="130.6" width="19.6" height="19.6" fill="#fdfeff"/><rect x="1007.9" y="137.6" width="10" height="5.6" fill="#b4e8ee"/>
<circle cx="1178" cy="140.8" r="4.4" fill="none" stroke="#d6d6d6" stroke-width="1.3"/>
<rect x="1190.7" y="136.4" width="7" height="7" fill="#4f82f2" stroke="#1f1f1f" stroke-width="1"/>
<g transform="translate(924.6,166.2)"><path d="M-8 0 C-5 -4.2 -2.5 -5.2 0 -5.2 C2.5 -5.2 5 -4.2 8 0 C5 4.2 2.5 5.2 0 5.2 C-2.5 5.2 -5 4.2 -8 0 Z" fill="#d2d2d2"/><circle cx="0" cy="0" r="2.9" fill="#c8c8c8" stroke="#444" stroke-width="1"/></g>
<path transform="translate(1013.6,166.2)" d="M-4.3 -2.1 L0 2.1 L4.3 -2.1" fill="none" stroke="#f0f0f0" stroke-width="1.7"/>
<rect x="1030.4" y="155.5" width="22.2" height="22.2" fill="#0c0c0c"/><rect x="1031.7" y="156.8" width="19.6" height="19.6" fill="#fdfeff"/><rect x="1034.9" y="162.8" width="13.4" height="8" fill="#b4e8ee"/><rect x="1034.9" y="165.3" width="13.4" height="1" fill="#d8f4f6"/><rect x="1034.9" y="167.8" width="13.4" height="1" fill="#d8f4f6"/>
<circle cx="1178" cy="167.0" r="4.4" fill="none" stroke="#d6d6d6" stroke-width="1.3"/>
<rect x="1190.7" y="162.6" width="7" height="7" fill="#4f82f2" stroke="#1f1f1f" stroke-width="1"/>
<g transform="translate(924.6,192.5)"><path d="M-8 0 C-5 -4.2 -2.5 -5.2 0 -5.2 C2.5 -5.2 5 -4.2 8 0 C5 4.2 2.5 5.2 0 5.2 C-2.5 5.2 -5 4.2 -8 0 Z" fill="#d2d2d2"/><circle cx="0" cy="0" r="2.9" fill="#c8c8c8" stroke="#444" stroke-width="1"/></g>
<path transform="translate(1042.4,192.5)" d="M-4.3 -2.1 L0 2.1 L4.3 -2.1" fill="none" stroke="#f0f0f0" stroke-width="1.7"/>
<rect x="1059.2" y="181.7" width="22.2" height="22.2" fill="#0c0c0c"/><rect x="1060.5" y="183.0" width="19.6" height="19.6" fill="#fdfeff"/><rect x="1060.5" y="186.0" width="19.6" height="13.5" fill="#bfecf1"/><rect x="1060.5" y="187.0" width="19.6" height="3.4" fill="url(#tst)"/><rect x="1060.5" y="191.1" width="19.6" height="3.4" fill="url(#tst)"/><rect x="1060.5" y="195.2" width="19.6" height="3.4" fill="url(#tst)"/>
<circle cx="1178" cy="193.3" r="4.4" fill="none" stroke="#d6d6d6" stroke-width="1.3"/>
<g transform="translate(924.6,218.7)"><path d="M-8 0 C-5 -4.2 -2.5 -5.2 0 -5.2 C2.5 -5.2 5 -4.2 8 0 C5 4.2 2.5 5.2 0 5.2 C-2.5 5.2 -5 4.2 -8 0 Z" fill="#d2d2d2"/><circle cx="0" cy="0" r="2.9" fill="#c8c8c8" stroke="#444" stroke-width="1"/></g>
<path transform="translate(1071.2,218.7)" d="M-4.3 -2.1 L0 2.1 L4.3 -2.1" fill="none" stroke="#f0f0f0" stroke-width="1.7"/>
<rect x="1088.0" y="208.0" width="22.2" height="22.2" fill="#0c0c0c"/><rect x="1089.3" y="209.3" width="19.6" height="19.6" fill="#fdfeff"/><path d="M1090.6 213.5 h17 M1090.6 223.8 h17" stroke="#deF1f7" stroke-width="1.1" stroke-dasharray="1.5 0.8"/>
<circle cx="1178" cy="219.5" r="4.4" fill="none" stroke="#d6d6d6" stroke-width="1.3"/>
<g transform="translate(924.6,244.9)"><path d="M-8 0 C-5 -4.2 -2.5 -5.2 0 -5.2 C2.5 -5.2 5 -4.2 8 0 C5 4.2 2.5 5.2 0 5.2 C-2.5 5.2 -5 4.2 -8 0 Z" fill="#d2d2d2"/><circle cx="0" cy="0" r="2.9" fill="#c8c8c8" stroke="#444" stroke-width="1"/></g>
<path transform="translate(1097.0,244.9)" d="M-2.1 -4.1 L2.1 0 L-2.1 4.1" fill="none" stroke="#f0f0f0" stroke-width="1.7"/>
<rect x="1116.8" y="234.2" width="22.2" height="22.2" fill="#0c0c0c"/><rect x="1118.1" y="235.5" width="19.6" height="19.6" fill="#fdfeff"/><path d="M1120.4 240.0 h15 M1120.4 250.0 h15" stroke="#e8f5f9" stroke-width="1"/>
<circle cx="1178" cy="245.7" r="4.4" fill="none" stroke="#d6d6d6" stroke-width="1.3"/>
<g transform="translate(924.6,271.1)"><path d="M-8 0 C-5 -4.2 -2.5 -5.2 0 -5.2 C2.5 -5.2 5 -4.2 8 0 C5 4.2 2.5 5.2 0 5.2 C-2.5 5.2 -5 4.2 -8 0 Z" fill="#d2d2d2"/><circle cx="0" cy="0" r="2.9" fill="#c8c8c8" stroke="#444" stroke-width="1"/></g>
<path transform="translate(1097.0,271.1)" d="M-2.1 -4.1 L2.1 0 L-2.1 4.1" fill="none" stroke="#f0f0f0" stroke-width="1.7"/>
<rect x="1116.8" y="260.4" width="22.2" height="22.2" fill="#0c0c0c"/><rect x="1118.1" y="261.7" width="19.6" height="19.6" fill="#fdfeff"/><path d="M1120.4 266.2 h15 M1120.4 276.2 h15" stroke="#e8f5f9" stroke-width="1"/>
<circle cx="1178" cy="271.9" r="4.4" fill="none" stroke="#d6d6d6" stroke-width="1.3"/>
<g transform="translate(924.6,297.3)"><path d="M-8 0 C-5 -4.2 -2.5 -5.2 0 -5.2 C2.5 -5.2 5 -4.2 8 0 C5 4.2 2.5 5.2 0 5.2 C-2.5 5.2 -5 4.2 -8 0 Z" fill="#d2d2d2"/><circle cx="0" cy="0" r="2.9" fill="#c8c8c8" stroke="#444" stroke-width="1"/></g>
<path transform="translate(1071.2,297.3)" d="M-4.3 -2.1 L0 2.1 L4.3 -2.1" fill="none" stroke="#f0f0f0" stroke-width="1.7"/>
<rect x="1088.0" y="286.6" width="22.2" height="22.2" fill="#0c0c0c"/><rect x="1089.3" y="287.9" width="19.6" height="19.6" fill="#fdfeff"/><path d="M1090.6 292.1 h17 M1090.6 302.4 h17" stroke="#deF1f7" stroke-width="1.1" stroke-dasharray="1.5 0.8"/>
<circle cx="1178" cy="298.1" r="4.3" fill="#8c8c8c" stroke="#bcbcbc" stroke-width="1.2"/>
<g transform="translate(924.6,323.6)"><path d="M-8 0 C-5 -4.2 -2.5 -5.2 0 -5.2 C2.5 -5.2 5 -4.2 8 0 C5 4.2 2.5 5.2 0 5.2 C-2.5 5.2 -5 4.2 -8 0 Z" fill="#d2d2d2"/><circle cx="0" cy="0" r="2.9" fill="#c8c8c8" stroke="#444" stroke-width="1"/></g>
<path transform="translate(1097.0,323.6)" d="M-2.1 -4.1 L2.1 0 L-2.1 4.1" fill="none" stroke="#f0f0f0" stroke-width="1.7"/>
<rect x="1116.8" y="312.8" width="22.2" height="22.2" fill="#0c0c0c"/><rect x="1118.1" y="314.1" width="19.6" height="19.6" fill="#fdfeff"/><path d="M1120.4 318.6 h15 M1120.4 328.6 h15" stroke="#e8f5f9" stroke-width="1"/>
<circle cx="1178" cy="324.3" r="4.4" fill="none" stroke="#d6d6d6" stroke-width="1.3"/>
<g transform="translate(924.6,349.8)"><path d="M-8 0 C-5 -4.2 -2.5 -5.2 0 -5.2 C2.5 -5.2 5 -4.2 8 0 C5 4.2 2.5 5.2 0 5.2 C-2.5 5.2 -5 4.2 -8 0 Z" fill="#d2d2d2"/><circle cx="0" cy="0" r="2.9" fill="#c8c8c8" stroke="#444" stroke-width="1"/></g>
<path transform="translate(1097.0,349.8)" d="M-2.1 -4.1 L2.1 0 L-2.1 4.1" fill="none" stroke="#f0f0f0" stroke-width="1.7"/>
<rect x="1116.8" y="339.1" width="22.2" height="22.2" fill="#0c0c0c"/><rect x="1118.1" y="340.4" width="19.6" height="19.6" fill="#fdfeff"/>
<circle cx="1178" cy="350.6" r="4.4" fill="none" stroke="#d6d6d6" stroke-width="1.3"/>
<g transform="translate(924.6,376.0)"><path d="M-8 0 C-5 -4.2 -2.5 -5.2 0 -5.2 C2.5 -5.2 5 -4.2 8 0 C5 4.2 2.5 5.2 0 5.2 C-2.5 5.2 -5 4.2 -8 0 Z" fill="#d2d2d2"/><circle cx="0" cy="0" r="2.9" fill="#c8c8c8" stroke="#444" stroke-width="1"/></g>
<path transform="translate(1097.0,376.0)" d="M-2.1 -4.1 L2.1 0 L-2.1 4.1" fill="none" stroke="#f0f0f0" stroke-width="1.7"/>
<rect x="1116.8" y="365.3" width="22.2" height="22.2" fill="#0c0c0c"/><rect x="1118.1" y="366.6" width="19.6" height="19.6" fill="#fdfeff"/><path d="M1120.4 371.1 h15 M1120.4 381.1 h15" stroke="#e8f5f9" stroke-width="1"/>
<circle cx="1178" cy="376.8" r="4.4" fill="none" stroke="#d6d6d6" stroke-width="1.3"/>
<g transform="translate(924.6,402.2)"><path d="M-8 0 C-5 -4.2 -2.5 -5.2 0 -5.2 C2.5 -5.2 5 -4.2 8 0 C5 4.2 2.5 5.2 0 5.2 C-2.5 5.2 -5 4.2 -8 0 Z" fill="#d2d2d2"/><circle cx="0" cy="0" r="2.9" fill="#c8c8c8" stroke="#444" stroke-width="1"/></g>
<rect x="1088.0" y="391.5" width="22.2" height="22.2" fill="#0c0c0c"/><rect x="1089.3" y="392.8" width="19.6" height="19.6" fill="#fdfeff"/><rect x="1089.3" y="398.0" width="19.6" height="9" fill="#b9eaef"/><rect x="1089.3" y="400.8" width="19.6" height="1" fill="#d2f2f5"/><rect x="1089.3" y="405.0" width="19.6" height="2" fill="#d6f3f6"/>
<circle cx="1178" cy="403.0" r="4.4" fill="none" stroke="#d6d6d6" stroke-width="1.3"/>
<g transform="translate(924.6,428.4)"><path d="M-8 0 C-5 -4.2 -2.5 -5.2 0 -5.2 C2.5 -5.2 5 -4.2 8 0 C5 4.2 2.5 5.2 0 5.2 C-2.5 5.2 -5 4.2 -8 0 Z" fill="#d2d2d2"/><circle cx="0" cy="0" r="2.9" fill="#c8c8c8" stroke="#444" stroke-width="1"/></g>
<rect x="1088.0" y="417.7" width="22.2" height="22.2" fill="#0c0c0c"/><rect x="1089.3" y="419.0" width="19.6" height="19.6" fill="#fdfeff"/><rect x="1089.3" y="423.3" width="19.6" height="10.8" fill="#bfecf1"/>
<circle cx="1178" cy="429.2" r="4.4" fill="none" stroke="#d6d6d6" stroke-width="1.3"/>
<g transform="translate(924.6,454.7)"><path d="M-8 0 C-5 -4.2 -2.5 -5.2 0 -5.2 C2.5 -5.2 5 -4.2 8 0 C5 4.2 2.5 5.2 0 5.2 C-2.5 5.2 -5 4.2 -8 0 Z" fill="#d2d2d2"/><circle cx="0" cy="0" r="2.9" fill="#c8c8c8" stroke="#444" stroke-width="1"/></g>
<path transform="translate(1042.4,454.7)" d="M-4.3 -2.1 L0 2.1 L4.3 -2.1" fill="none" stroke="#f0f0f0" stroke-width="1.7"/>
<rect x="1059.2" y="443.9" width="22.2" height="22.2" fill="#0c0c0c"/><rect x="1060.5" y="445.2" width="19.6" height="19.6" fill="#fdfeff"/><rect x="1060.5" y="449.0" width="19.6" height="11" fill="#c3d6e0"/>
<circle cx="1178" cy="455.4" r="4.3" fill="#8c8c8c" stroke="#bcbcbc" stroke-width="1.2"/>
<g transform="translate(924.6,480.9)"><path d="M-8 0 C-5 -4.2 -2.5 -5.2 0 -5.2 C2.5 -5.2 5 -4.2 8 0 C5 4.2 2.5 5.2 0 5.2 C-2.5 5.2 -5 4.2 -8 0 Z" fill="#d2d2d2"/><circle cx="0" cy="0" r="2.9" fill="#c8c8c8" stroke="#444" stroke-width="1"/></g>
<rect x="1088.0" y="470.2" width="22.2" height="22.2" fill="#0c0c0c"/><rect x="1089.3" y="471.5" width="19.6" height="19.6" fill="#fdfeff"/><rect x="1089.3" y="475.3" width="19.6" height="11" fill="#c3d6e0"/>
<circle cx="1178" cy="481.7" r="4.3" fill="#8c8c8c" stroke="#bcbcbc" stroke-width="1.2"/>
<g transform="translate(924.6,507.1)"><path d="M-8 0 C-5 -4.2 -2.5 -5.2 0 -5.2 C2.5 -5.2 5 -4.2 8 0 C5 4.2 2.5 5.2 0 5.2 C-2.5 5.2 -5 4.2 -8 0 Z" fill="#d2d2d2"/><circle cx="0" cy="0" r="2.9" fill="#c8c8c8" stroke="#444" stroke-width="1"/></g>
<rect x="1088.0" y="496.4" width="22.2" height="22.2" fill="#0c0c0c"/><rect x="1089.3" y="497.7" width="19.6" height="19.6" fill="#fdfeff"/>
<circle cx="1178" cy="507.9" r="4.3" fill="#8c8c8c" stroke="#bcbcbc" stroke-width="1.2"/>
<g transform="translate(924.6,533.3)"><path d="M-8 0 C-5 -4.2 -2.5 -5.2 0 -5.2 C2.5 -5.2 5 -4.2 8 0 C5 4.2 2.5 5.2 0 5.2 C-2.5 5.2 -5 4.2 -8 0 Z" fill="#d2d2d2"/><circle cx="0" cy="0" r="2.9" fill="#c8c8c8" stroke="#444" stroke-width="1"/></g>
<path transform="translate(1042.4,533.3)" d="M-4.3 -2.1 L0 2.1 L4.3 -2.1" fill="none" stroke="#f0f0f0" stroke-width="1.7"/>
<rect x="1059.2" y="522.6" width="22.2" height="22.2" fill="#0c0c0c"/><rect x="1060.5" y="523.9" width="19.6" height="19.6" fill="#fdfeff"/>
<circle cx="1178" cy="534.1" r="4.4" fill="none" stroke="#d6d6d6" stroke-width="1.3"/>
<rect x="1190.7" y="529.7" width="7" height="7" fill="#4f82f2" stroke="#1f1f1f" stroke-width="1"/>
<g transform="translate(924.6,559.5)"><path d="M-8 0 C-5 -4.2 -2.5 -5.2 0 -5.2 C2.5 -5.2 5 -4.2 8 0 C5 4.2 2.5 5.2 0 5.2 C-2.5 5.2 -5 4.2 -8 0 Z" fill="#d2d2d2"/><circle cx="0" cy="0" r="2.9" fill="#c8c8c8" stroke="#444" stroke-width="1"/></g>
<path transform="translate(1071.2,559.5)" d="M-4.3 -2.1 L0 2.1 L4.3 -2.1" fill="none" stroke="#f0f0f0" stroke-width="1.7"/>
<rect x="1088.0" y="548.8" width="22.2" height="22.2" fill="#0c0c0c"/><rect x="1089.3" y="550.1" width="19.6" height="19.6" fill="#fdfeff"/><path d="M1098.3 552.4 a7 7.5 0 0 1 0 15" fill="none" stroke="#cfe3ee" stroke-width="0.9"/>
<circle cx="1178" cy="560.3" r="4.4" fill="none" stroke="#d6d6d6" stroke-width="1.3"/>
<rect x="1190.7" y="555.9" width="7" height="7" fill="#4f82f2" stroke="#1f1f1f" stroke-width="1"/>
<g transform="translate(924.6,585.8)"><path d="M-8 0 C-5 -4.2 -2.5 -5.2 0 -5.2 C2.5 -5.2 5 -4.2 8 0 C5 4.2 2.5 5.2 0 5.2 C-2.5 5.2 -5 4.2 -8 0 Z" fill="#d2d2d2"/><circle cx="0" cy="0" r="2.9" fill="#c8c8c8" stroke="#444" stroke-width="1"/></g>
<path transform="translate(1097.0,585.8)" d="M-2.1 -4.1 L2.1 0 L-2.1 4.1" fill="none" stroke="#f0f0f0" stroke-width="1.7"/>
<rect x="1116.8" y="575.0" width="22.2" height="22.2" fill="#0c0c0c"/><rect x="1118.1" y="576.3" width="19.6" height="19.6" fill="#fdfeff"/><path d="M1128.1 578.1 a7.5 8 0 0 1 0 16" fill="none" stroke="#d8e8f0" stroke-width="0.8"/>
<circle cx="1178" cy="586.5" r="4.3" fill="#8c8c8c" stroke="#bcbcbc" stroke-width="1.2"/>
<rect x="1190.7" y="582.1" width="7" height="7" fill="#4f82f2" stroke="#1f1f1f" stroke-width="1"/>
<g transform="translate(924.6,612.0)"><path d="M-8 0 C-5 -4.2 -2.5 -5.2 0 -5.2 C2.5 -5.2 5 -4.2 8 0 C5 4.2 2.5 5.2 0 5.2 C-2.5 5.2 -5 4.2 -8 0 Z" fill="#d2d2d2"/><circle cx="0" cy="0" r="2.9" fill="#c8c8c8" stroke="#444" stroke-width="1"/></g>
<path transform="translate(1097.0,612.0)" d="M-2.1 -4.1 L2.1 0 L-2.1 4.1" fill="none" stroke="#f0f0f0" stroke-width="1.7"/>
<rect x="1116.8" y="601.3" width="22.2" height="22.2" fill="#0c0c0c"/><rect x="1118.1" y="602.6" width="19.6" height="19.6" fill="#fdfeff"/><path d="M1128.1 604.4 a7.5 8 0 0 1 0 16" fill="none" stroke="#d8e8f0" stroke-width="0.8"/>
<circle cx="1178" cy="612.8" r="4.3" fill="#8c8c8c" stroke="#bcbcbc" stroke-width="1.2"/>
<g transform="translate(924.6,638.2)"><path d="M-8 0 C-5 -4.2 -2.5 -5.2 0 -5.2 C2.5 -5.2 5 -4.2 8 0 C5 4.2 2.5 5.2 0 5.2 C-2.5 5.2 -5 4.2 -8 0 Z" fill="#d2d2d2"/><circle cx="0" cy="0" r="2.9" fill="#c8c8c8" stroke="#444" stroke-width="1"/></g>
<path transform="translate(1071.2,638.2)" d="M-4.3 -2.1 L0 2.1 L4.3 -2.1" fill="none" stroke="#f0f0f0" stroke-width="1.7"/>
<rect x="1088.0" y="627.5" width="22.2" height="22.2" fill="#0c0c0c"/><rect x="1089.3" y="628.8" width="19.6" height="19.6" fill="#fdfeff"/><path d="M1099.8 631.1 a7 7.5 0 0 0 0 15" fill="none" stroke="#cfe3ee" stroke-width="0.9"/>
<circle cx="1178" cy="639.0" r="4.4" fill="none" stroke="#d6d6d6" stroke-width="1.3"/>
<g transform="translate(924.6,664.4)"><path d="M-8 0 C-5 -4.2 -2.5 -5.2 0 -5.2 C2.5 -5.2 5 -4.2 8 0 C5 4.2 2.5 5.2 0 5.2 C-2.5 5.2 -5 4.2 -8 0 Z" fill="#d2d2d2"/><circle cx="0" cy="0" r="2.9" fill="#c8c8c8" stroke="#444" stroke-width="1"/></g>
<path transform="translate(1097.0,664.4)" d="M-2.1 -4.1 L2.1 0 L-2.1 4.1" fill="none" stroke="#f0f0f0" stroke-width="1.7"/>
<rect x="1116.8" y="653.7" width="22.2" height="22.2" fill="#0c0c0c"/><rect x="1118.1" y="655.0" width="19.6" height="19.6" fill="#fdfeff"/><path d="M1127.6 656.8 a7.5 8 0 0 0 0 16" fill="none" stroke="#d8e8f0" stroke-width="0.8"/>
<circle cx="1178" cy="665.2" r="4.3" fill="#8c8c8c" stroke="#bcbcbc" stroke-width="1.2"/>
<g transform="translate(924.6,690.6)"><path d="M-8 0 C-5 -4.2 -2.5 -5.2 0 -5.2 C2.5 -5.2 5 -4.2 8 0 C5 4.2 2.5 5.2 0 5.2 C-2.5 5.2 -5 4.2 -8 0 Z" fill="#d2d2d2"/><circle cx="0" cy="0" r="2.9" fill="#c8c8c8" stroke="#444" stroke-width="1"/></g>
<path transform="translate(1097.0,690.6)" d="M-2.1 -4.1 L2.1 0 L-2.1 4.1" fill="none" stroke="#f0f0f0" stroke-width="1.7"/>
<rect x="1116.8" y="679.9" width="22.2" height="22.2" fill="#0c0c0c"/><rect x="1118.1" y="681.2" width="19.6" height="19.6" fill="#fdfeff"/><path d="M1127.6 683.0 a7.5 8 0 0 0 0 16" fill="none" stroke="#d8e8f0" stroke-width="0.8"/>
<circle cx="1178" cy="691.4" r="4.3" fill="#8c8c8c" stroke="#bcbcbc" stroke-width="1.2"/>
<g transform="translate(924.6,716.8)"><path d="M-8 0 C-5 -4.2 -2.5 -5.2 0 -5.2 C2.5 -5.2 5 -4.2 8 0 C5 4.2 2.5 5.2 0 5.2 C-2.5 5.2 -5 4.2 -8 0 Z" fill="#d2d2d2"/><circle cx="0" cy="0" r="2.9" fill="#c8c8c8" stroke="#444" stroke-width="1"/></g>
<rect x="1030.4" y="706.1" width="22.2" height="22.2" fill="#0c0c0c"/><rect x="1031.7" y="707.4" width="19.6" height="19.6" fill="#fdfeff"/>
<circle cx="1178" cy="717.6" r="4.4" fill="none" stroke="#d6d6d6" stroke-width="1.3"/>
<path d="M1201.5 128.0 L1208.5 128.0 L1208.5 135.0 Z" fill="#d0d0d0"/>
</svg>
<div class="lt" style="left:1031.0px;top:133.4px;font-size:14px;letter-spacing:0.3px">Mask</div>
<div class="lt" style="left:1059.8px;top:159.0px"><span class="ab">&lt;</span>编组<span class="ab r">&gt;</span></div>
<div class="lt" style="left:1089.6px;top:185.6px;letter-spacing:4px;font-size:14px">...</div>
<div class="lt" style="left:1088.6px;top:447.4px">混合</div>
<div class="lt" style="left:1089.6px;top:526.4px;letter-spacing:4px;font-size:14px">...</div>
<div class="lt" style="left:1059.8px;top:709.6px"><span class="ab">&lt;</span>矩形<span class="ab r">&gt;</span></div>
<!-- panelfoot -->
<div class="abs" style="left:910.5px;top:801px;width:299px;height:1px;background:#606060;"></div>
<div class="abs" style="left:911px;top:730px;width:1px;height:71px;background:#606060;"></div>
<div class="abs" style="left:1208.5px;top:730px;width:1px;height:71px;background:#606060;"></div>
<div class="lt" style="left:912px;top:806px;font-size:14px;letter-spacing:2.6px">1...</div>
<svg id="footsvg" style="left:0;top:0" width="1223" height="831" viewBox="0 0 1223 831">
  <g fill="none" stroke="#7a7a7a" stroke-width="1.5">
    <path d="M1012 808 L1006.3 808 L1006.3 820.3 L1018.5 820.3 L1018.5 814.5"/>
    <path d="M1011.5 815 L1020.2 806.3 M1014.5 806 L1020.5 806 L1020.5 812"/>
    <rect x="1071" y="807" width="10" height="10"/><rect x="1074.5" y="810.5" width="10" height="10"/><rect x="1076" y="812" width="4" height="4" fill="#7a7a7a"/>
    <path d="M1101 806.5 L1101 811.5 L1105 811.5 M1103.5 809 L1106 811.5 L1103.5 814"/>
    <rect x="1108.5" y="808.5" width="10.5" height="10.5"/><path d="M1113.7 810.5 V817 M1110.5 813.7 H1117"/>
    <path d="M1170 808 L1171 820 L1178 820 L1179 808 M1168 807.5 H1181"/>
  </g>
  <circle cx="1044.3" cy="811.8" r="5" fill="none" stroke="#e2e2e2" stroke-width="1.8"/>
  <path d="M1048 815.8 L1053 821" stroke="#e2e2e2" stroke-width="2.6" fill="none"/>
  <path d="M1137.5 812 L1137.5 819.5 L1150.5 819.5 L1150.5 812" fill="none" stroke="#cfcfcf" stroke-width="1.5"/>
</svg>
<div id="wm1">4</div>
<div id="wm4">23</div>
<div id="wm2">DOWN</div>
<div id="wm3">423down.com</div>

</div>
</body></html>
